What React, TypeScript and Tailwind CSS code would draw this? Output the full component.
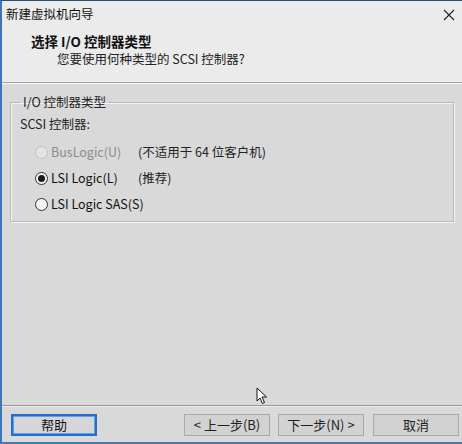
import React from 'react';

const font = { fontFamily: '"Noto Sans CJK SC", "Microsoft YaHei", sans-serif' };

function Radio({ checked, disabled }: { checked?: boolean; disabled?: boolean }) {
  return (
    <span
      className={`flex h-[13px] w-[13px] shrink-0 items-center justify-center rounded-full border ${
        disabled ? 'border-[#c2c2c2] bg-[#e4e4e4]' : 'border-[#333333] bg-[#f4f4f4]'
      }`}
    >
      {checked && <span className="h-[7px] w-[7px] rounded-full bg-[#1a1a1a]" />}
    </span>
  );
}

function Button({ label, primary }: { label: string; primary?: boolean }) {
  return (
    <button
      className={`flex h-[22px] w-[86px] items-center justify-center text-[13px] ${
        primary
          ? 'border-2 border-[#1e6fd0] bg-[#d6d6d6] shadow-[inset_0_0_0_1px_#5fa0e6] text-[#111]'
          : 'border border-[#a9a9a9] bg-[#d2d2d2] text-[#222]'
      }`}
    >
      {label}
    </button>
  );
}

export default function App() {
  const options = [
    { label: 'BusLogic(U)', note: '(不适用于 64 位客户机)', disabled: true },
    { label: 'LSI Logic(L)', note: '(推荐)', checked: true },
    { label: 'LSI Logic SAS(S)' },
  ];

  return (
    <div
      className="relative flex h-[444px] w-[462px] flex-col overflow-hidden border-l-2 border-t border-b-2 border-l-[#3a77b8] border-t-[#24507c] border-b-[#4a78a8] bg-[#d9d9d9] text-[#111]"
      style={font}
    >
      {/* title bar */}
      <div className="flex h-[27px] shrink-0 items-center justify-between bg-[#ebebeb] pl-[4px] pr-[6px]">
        <span className="text-[12.5px] text-[#111]">新建虚拟机向导</span>
        <svg width="12" height="12" viewBox="0 0 12 12" className="mr-[1px]">
          <path d="M1 1 L11 11 M11 1 L1 11" stroke="#222" strokeWidth="1.1" />
        </svg>
      </div>

      {/* header */}
      <div className="flex h-[54px] shrink-0 flex-col bg-[#ebebeb] pl-[29px] pt-[4px]">
        <span className="text-[13.5px] font-bold leading-[18px]">选择 I/O 控制器类型</span>
        <span className="ml-[26px] text-[12.5px] leading-[18px] text-[#222]">您要使用何种类型的 SCSI 控制器?</span>
      </div>
      <div className="h-px shrink-0 bg-[#a0a0a0]" />
      <div className="h-px shrink-0 bg-[#f8f8f8]" />

      {/* body */}
      <div className="flex flex-1 flex-col px-[8px] pt-[11px]">
        <fieldset className="h-[127px] border border-[#b8b8b8] pl-[9px] shadow-[inset_1px_1px_0_#f4f4f4,1px_1px_0_#f4f4f4]">
          <legend className="ml-[1px] px-[2px] text-[12.5px] leading-[14px] text-[#222]">I/O 控制器类型</legend>
          <div className="mt-[6px] text-[12.5px] leading-[18px] text-[#222]">SCSI 控制器:</div>
          <div className="mt-[6px] flex flex-col">
            {options.map((o) => (
              <div key={o.label} className="flex h-[26px] items-center pl-[15px]">
                <Radio checked={o.checked} disabled={o.disabled} />
                <span
                  className={`ml-[3px] w-[87px] whitespace-nowrap text-[12.5px] ${
                    o.disabled ? 'text-[#8c8c8c]' : 'text-[#111]'
                  }`}
                >
                  {o.label}
                </span>
                {o.note && <span className="whitespace-nowrap text-[12.5px] text-[#222]">{o.note}</span>}
              </div>
            ))}
          </div>
        </fieldset>
      </div>

      <div className="h-px shrink-0 bg-[#9a9a9a]" />
      <div className="h-px shrink-0 bg-[#ececec]" />

      {/* footer */}
      <div className="flex h-[35px] shrink-0 items-center pl-[9px] pr-[3px]">
        <Button label="帮助" primary />
        <div className="flex-1" />
        <Button label="< 上一步(B)" />
        <div className="w-[8px]" />
        <Button label="下一步(N) >" />
        <div className="w-[9px]" />
        <Button label="取消" />
      </div>

      {/* mouse cursor */}
      <svg className="absolute left-[254px] top-[386px]" width="12" height="18" viewBox="0 0 12 18">
        <path
          d="M1 1 L1 14 L4 11 L6.5 16.5 L8.5 15.5 L6 10 L10.5 10 Z"
          fill="#fff"
          stroke="#111"
          strokeWidth="1"
          strokeLinejoin="round"
        />
      </svg>
    </div>
  );
}
